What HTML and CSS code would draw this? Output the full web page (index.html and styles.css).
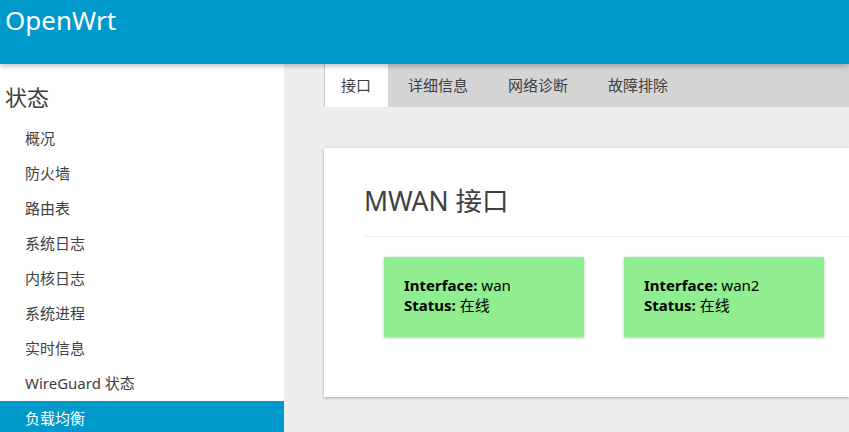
FILE: index.html
```html
<!DOCTYPE html>
<html lang="zh-CN">
<head>
<meta charset="utf-8">
<title>OpenWrt - MWAN</title>
<link rel="stylesheet" href="styles.css">
</head>
<body>
<header class="topbar">
  <span class="brand">OpenWrt</span>
</header>
<div class="page">
  <aside class="sidebar">
    <div class="menu-title">状态</div>
    <ul class="menu">
      <li>概况</li>
      <li>防火墙</li>
      <li>路由表</li>
      <li>系统日志</li>
      <li>内核日志</li>
      <li>系统进程</li>
      <li>实时信息</li>
      <li>WireGuard 状态</li>
      <li class="active">负载均衡</li>
    </ul>
  </aside>
  <main class="main">
    <ul class="tabs">
      <li class="tab active">接口</li>
      <li class="tab">详细信息</li>
      <li class="tab">网络诊断</li>
      <li class="tab">故障排除</li>
    </ul>
    <section class="card">
      <h2 class="card-title">MWAN 接口</h2>
      <div class="ifaces">
        <div class="iface"><b>Interface:</b> wan<br><b>Status:</b> 在线</div>
        <div class="iface"><b>Interface:</b> wan2<br><b>Status:</b> 在线</div>
      </div>
    </section>
  </main>
</div>
</body>
</html>
```

FILE: styles.css
```css
* { box-sizing: border-box; }
html, body { margin: 0; padding: 0; }
body {
  font-family: "Noto Sans", "Noto Sans CJK SC", sans-serif;
  background: #eeeeee;
  color: #404040;
  height: 432px;
  overflow: hidden;
}
.topbar {
  position: relative;
  z-index: 2;
  height: 64px;
  background: #0099cc;
  box-shadow: 0 2px 5px rgba(0,0,0,0.26);
  padding: 0 5px;
}
.brand {
  display: block;
  color: #fff;
  font-size: 26px;
  line-height: 41px;
}
.page {
  display: flex;
  height: 368px;
}
.sidebar {
  width: 284px;
  flex: none;
  background: #fff;
}
.menu-title {
  font-size: 22px;
  line-height: 30px;
  padding: 18px 5px 0;
  color: #404040;
}
.menu {
  list-style: none;
  margin: 9px 0 0;
  padding: 0;
}
.menu li {
  height: 35px;
  line-height: 35px;
  font-size: 15px;
  padding-left: 25px;
  color: #404040;
}
.menu li.active {
  background: #0099cc;
  color: #fff;
}
.main {
  flex: 1;
  padding: 0 0 0 40px;
  min-width: 0;
}
.tabs {
  list-style: none;
  margin: 0;
  padding: 0;
  display: flex;
  height: 43px;
  background: #d4d4d4;
}
.tab {
  font-size: 15px;
  line-height: 43px;
  padding: 0 20px;
  color: #404040;
}
.tab.active {
  background: #fff;
  border-left: 1px solid #c8c8c8;
  padding: 0 17px 0 16px;
}
.card {
  margin-top: 41px;
  background: #fff;
  height: 249px;
  padding: 30px 0 0 40px;
  box-shadow: 0 1px 3px rgba(0,0,0,0.3);
}
.card-title {
  margin: 0;
  font-weight: normal;
  font-size: 26.5px;
  line-height: 46px;
  padding-bottom: 12px;
  border-bottom: 1px solid #eeeeee;
  color: #404040;
}
.ifaces {
  display: flex;
  gap: 40px;
  padding: 20px 0 0 20px;
}
.iface {
  width: 200px;
  height: 80px;
  background: #90ee90;
  color: #000;
  font-size: 15px;
  line-height: 20px;
  padding: 18px 20px;
  box-shadow: 0 1px 3px rgba(0,0,0,0.25);
}
.iface b { font-weight: bold; }
```
